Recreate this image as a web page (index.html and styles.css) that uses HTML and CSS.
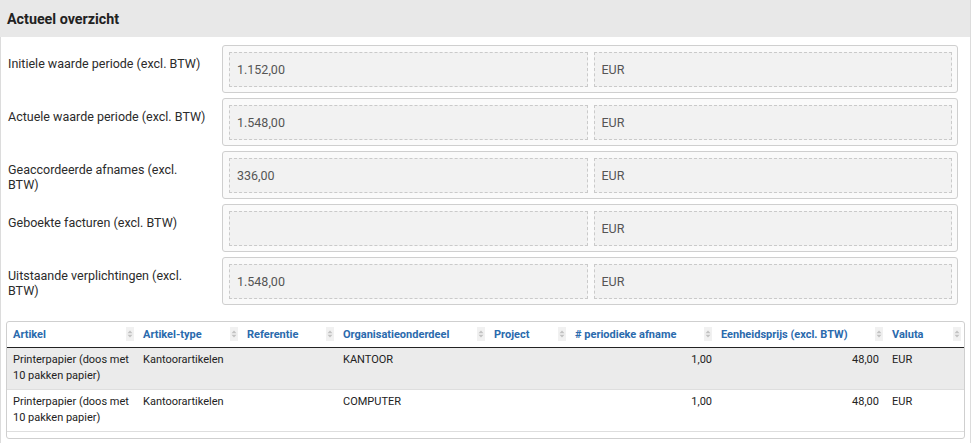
FILE: index.html
```html
<!DOCTYPE html>
<html lang="nl">
<head>
<meta charset="utf-8">
<title>Actueel overzicht</title>
<link rel="stylesheet" href="styles.css">
</head>
<body>
<section class="panel">
  <header class="panel-head"><h2>Actueel overzicht</h2></header>
  <div class="panel-body">
    <div class="form-row">
      <label class="lbl">Initiele waarde periode (excl. BTW)</label>
      <div class="field-box"><div class="ro">1.152,00</div><div class="ro">EUR</div></div>
    </div>
    <div class="form-row">
      <label class="lbl">Actuele waarde periode (excl. BTW)</label>
      <div class="field-box"><div class="ro">1.548,00</div><div class="ro">EUR</div></div>
    </div>
    <div class="form-row">
      <label class="lbl">Geaccordeerde afnames (excl. BTW)</label>
      <div class="field-box"><div class="ro">336,00</div><div class="ro">EUR</div></div>
    </div>
    <div class="form-row">
      <label class="lbl">Geboekte facturen (excl. BTW)</label>
      <div class="field-box"><div class="ro"></div><div class="ro">EUR</div></div>
    </div>
    <div class="form-row">
      <label class="lbl">Uitstaande verplichtingen (excl. BTW)</label>
      <div class="field-box"><div class="ro">1.548,00</div><div class="ro">EUR</div></div>
    </div>

    <div class="grid-wrap">
      <table class="grid">
        <colgroup>
          <col class="c1"><col class="c2"><col class="c3"><col class="c4"><col class="c5"><col class="c6"><col class="c7"><col class="c8">
        </colgroup>
        <thead>
          <tr>
            <th><div class="th-in"><span>Artikel</span><svg class="sort" viewBox="0 0 8 14"><path d="M4 3.5 L6.5 6.2 L1.5 6.2 Z M4 10.5 L6.5 7.8 L1.5 7.8 Z"/></svg></div></th>
            <th><div class="th-in"><span>Artikel-type</span><svg class="sort" viewBox="0 0 8 14"><path d="M4 3.5 L6.5 6.2 L1.5 6.2 Z M4 10.5 L6.5 7.8 L1.5 7.8 Z"/></svg></div></th>
            <th><div class="th-in"><span>Referentie</span><svg class="sort" viewBox="0 0 8 14"><path d="M4 3.5 L6.5 6.2 L1.5 6.2 Z M4 10.5 L6.5 7.8 L1.5 7.8 Z"/></svg></div></th>
            <th><div class="th-in"><span>Organisatieonderdeel</span><svg class="sort" viewBox="0 0 8 14"><path d="M4 3.5 L6.5 6.2 L1.5 6.2 Z M4 10.5 L6.5 7.8 L1.5 7.8 Z"/></svg></div></th>
            <th><div class="th-in"><span>Project</span><svg class="sort" viewBox="0 0 8 14"><path d="M4 3.5 L6.5 6.2 L1.5 6.2 Z M4 10.5 L6.5 7.8 L1.5 7.8 Z"/></svg></div></th>
            <th><div class="th-in"><span># periodieke afname</span><svg class="sort" viewBox="0 0 8 14"><path d="M4 3.5 L6.5 6.2 L1.5 6.2 Z M4 10.5 L6.5 7.8 L1.5 7.8 Z"/></svg></div></th>
            <th><div class="th-in"><span>Eenheidsprijs (excl. BTW)</span><svg class="sort" viewBox="0 0 8 14"><path d="M4 3.5 L6.5 6.2 L1.5 6.2 Z M4 10.5 L6.5 7.8 L1.5 7.8 Z"/></svg></div></th>
            <th><div class="th-in"><span>Valuta</span><svg class="sort" viewBox="0 0 8 14"><path d="M4 3.5 L6.5 6.2 L1.5 6.2 Z M4 10.5 L6.5 7.8 L1.5 7.8 Z"/></svg></div></th>
          </tr>
        </thead>
        <tbody>
          <tr class="odd">
            <td>Printerpapier (doos met 10 pakken papier)</td>
            <td>Kantoorartikelen</td>
            <td></td>
            <td>KANTOOR</td>
            <td></td>
            <td class="num n6">1,00</td>
            <td class="num n7">48,00</td>
            <td>EUR</td>
          </tr>
          <tr>
            <td>Printerpapier (doos met 10 pakken papier)</td>
            <td>Kantoorartikelen</td>
            <td></td>
            <td>COMPUTER</td>
            <td></td>
            <td class="num n6">1,00</td>
            <td class="num n7">48,00</td>
            <td>EUR</td>
          </tr>
        </tbody>
      </table>
    </div>
  </div>
</section>
</body>
</html>
```

FILE: styles.css
```css
* { box-sizing: border-box; }

html, body {
  margin: 0;
  padding: 0;
  background: #ffffff;
  font-family: Roboto, "Liberation Sans", Arial, sans-serif;
  color: #333;
}

.panel {
  border-left: 1px solid #dcdcdc;
  border-right: 1px solid #dcdcdc;
  min-height: 443px;
}

.panel-head {
  height: 37px;
  background: #e8e8e8;
  display: flex;
  align-items: center;
  padding-left: 7px;
  margin-left: -1px;
}

.panel-head h2 {
  margin: 0;
  font-size: 14.3px;
  font-weight: 700;
  color: #222;
  line-height: 16px;
}

.panel-body {
  padding: 8px 5px 0 5px;
}

.form-row {
  display: grid;
  grid-template-columns: 200px 1fr;
  column-gap: 14px;
  margin: 0 7px 5px 2px;
}

.lbl {
  font-size: 12.5px;
  line-height: 15px;
  color: #2b2b2b;
  padding-top: 11px;
}

.field-box {
  height: 48px;
  border: 1px solid #cfcfcf;
  border-radius: 3px;
  background: #fafafa;
  padding: 6px 5px 5px 6px;
  display: grid;
  grid-template-columns: 1fr 1fr;
  column-gap: 6px;
}

.ro {
  height: 35px;
  border: 1px dashed #cacaca;
  background: #f2f2f2;
  font-size: 12.5px;
  color: #555;
  display: flex;
  align-items: center;
  padding-left: 7px;
}

.grid-wrap {
  margin-top: 16px;
  border: 1px solid #cfcfcf;
  border-radius: 3px;
  padding-bottom: 6px;
}

.grid {
  width: 100%;
  table-layout: fixed;
  border-collapse: collapse;
  font-size: 11px;
}

.c1 { width: 130px; }
.c2 { width: 104px; }
.c3 { width: 96px; }
.c4 { width: 151px; }
.c5 { width: 81px; }
.c6 { width: 146px; }
.c7 { width: 171px; }
.c8 { width: 78px; }

.grid th {
  height: 25px;
  padding: 0 3px 0 6px;
  text-align: left;
  font-weight: 700;
  color: #2a6aad;
  border-bottom: 1px solid #222;
  vertical-align: middle;
}

.th-in {
  display: flex;
  align-items: center;
  justify-content: space-between;
  white-space: nowrap;
}

.sort {
  width: 8px;
  height: 14px;
  background: #f1f1f1;
  fill: #c2c2c2;
  flex: none;
}

.grid td {
  height: 41px;
  padding: 4px 6px 5px 6px;
  line-height: 16px;
  color: #222;
  vertical-align: top;
  border-bottom: 1px solid #dedede;
}

.grid tr.odd td { background: #ebebeb; }

.grid td.num { text-align: right; }
.grid td.n6 { padding-right: 3px; }
.grid td.n7 { padding-right: 7px; }
```
